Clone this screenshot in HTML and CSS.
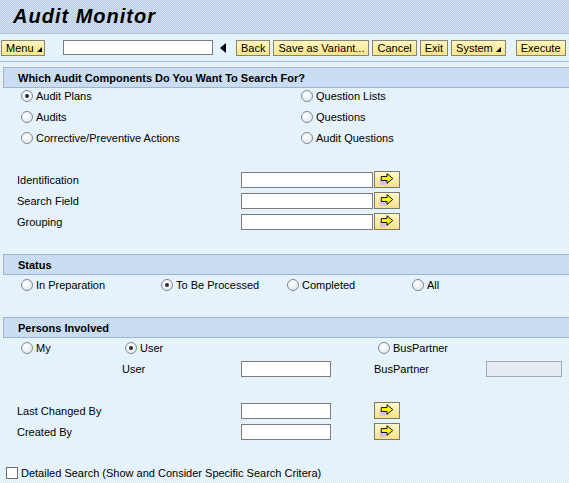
FILE: index.html
```html
<!DOCTYPE html>
<html>
<head>
<meta charset="utf-8">
<link rel="stylesheet" href="styles.css">
</head>
<body>
<div class="titlebar"><h1 class="title">Audit Monitor</h1></div>
<div class="toolbar">
  <button class="btn menu">Menu<span class="tri"></span></button>
  <input class="cmd" type="text">
  <span class="back-tri"></span>
  <button class="btn b-back">Back</button>
  <button class="btn">Save as Variant...</button>
  <button class="btn">Cancel</button>
  <button class="btn">Exit</button>
  <button class="btn">System<span class="tri"></span></button>
  <button class="btn b-exec">Execute</button>
</div>
<div class="content">
  <div class="sec-head first">Which Audit Components Do You Want To Search For?</div>
  <div class="comp-grid">
    <label class="radio"><span class="rb on"></span>Audit Plans</label>
    <label class="radio"><span class="rb"></span>Question Lists</label>
    <label class="radio"><span class="rb"></span>Audits</label>
    <label class="radio"><span class="rb"></span>Questions</label>
    <label class="radio"><span class="rb"></span>Corrective/Preventive Actions</label>
    <label class="radio"><span class="rb"></span>Audit Questions</label>
  </div>
  <div class="fields f1">
    <div class="frow"><span class="flabel">Identification</span><span class="inp wide"></span><span class="arrow"><svg width="25" height="16" viewBox="0 0 25 16"><rect x="5" y="9" width="7" height="5" fill="#d8bfe6"/><path d="M6.5 5.5 H12.5 V2.5 L18.5 7.5 L12.5 12.5 V9.5 H6.5 Z" fill="#ffff00" stroke="#000" stroke-width="1"/></svg></span></div>
    <div class="frow"><span class="flabel">Search Field</span><span class="inp wide"></span><span class="arrow"><svg width="25" height="16" viewBox="0 0 25 16"><rect x="5" y="9" width="7" height="5" fill="#d8bfe6"/><path d="M6.5 5.5 H12.5 V2.5 L18.5 7.5 L12.5 12.5 V9.5 H6.5 Z" fill="#ffff00" stroke="#000" stroke-width="1"/></svg></span></div>
    <div class="frow"><span class="flabel">Grouping</span><span class="inp wide"></span><span class="arrow"><svg width="25" height="16" viewBox="0 0 25 16"><rect x="5" y="9" width="7" height="5" fill="#d8bfe6"/><path d="M6.5 5.5 H12.5 V2.5 L18.5 7.5 L12.5 12.5 V9.5 H6.5 Z" fill="#ffff00" stroke="#000" stroke-width="1"/></svg></span></div>
  </div>
  <div class="sec-head status">Status</div>
  <div class="status-row">
    <label class="radio"><span class="rb"></span>In Preparation</label>
    <label class="radio"><span class="rb on"></span>To Be Processed</label>
    <label class="radio"><span class="rb"></span>Completed</label>
    <label class="radio"><span class="rb"></span>All</label>
  </div>
  <div class="sec-head persons">Persons Involved</div>
  <div class="persons-row">
    <label class="radio"><span class="rb"></span>My</label>
    <label class="radio"><span class="rb on"></span>User</label>
    <label class="radio"><span class="rb"></span>BusPartner</label>
  </div>
  <div class="user-row">
    <span class="ulabel">User</span>
    <span class="inp short"></span>
    <span class="blabel">BusPartner</span>
    <span class="inp dis"></span>
  </div>
  <div class="fields f2">
    <div class="frow"><span class="flabel">Last Changed By</span><span class="inp short"></span><span class="arrow far"><svg width="25" height="16" viewBox="0 0 25 16"><rect x="5" y="9" width="7" height="5" fill="#d8bfe6"/><path d="M6.5 5.5 H12.5 V2.5 L18.5 7.5 L12.5 12.5 V9.5 H6.5 Z" fill="#ffff00" stroke="#000" stroke-width="1"/></svg></span></div>
    <div class="frow"><span class="flabel">Created By</span><span class="inp short"></span><span class="arrow far"><svg width="25" height="16" viewBox="0 0 25 16"><rect x="5" y="9" width="7" height="5" fill="#d8bfe6"/><path d="M6.5 5.5 H12.5 V2.5 L18.5 7.5 L12.5 12.5 V9.5 H6.5 Z" fill="#ffff00" stroke="#000" stroke-width="1"/></svg></span></div>
  </div>
  <label class="check"><span class="cb"></span>Detailed Search (Show and Consider Specific Search Critera)</label>
</div>
</body>
</html>
```
FILE: styles.css
```css
* { box-sizing: border-box; }
html, body { margin: 0; padding: 0; }
body {
  width: 569px;
  height: 483px;
  overflow: hidden;
  font-family: "Liberation Sans", Arial, sans-serif;
  font-size: 11px;
  color: #000;
  background: repeating-conic-gradient(#dcecfa 0 25%, #eef9fd 0 50%) 0 0 / 2px 2px;
}
.titlebar {
  height: 34px;
  padding-left: 13px;
  background: repeating-conic-gradient(#bccde6 0 25%, #d2e0f0 0 50%) 0 0 / 2px 2px;
  border-bottom: 1px solid #aebfd8;
  display: flex;
  align-items: center;
}
.title {
  margin: 0;
  font-family: "Liberation Sans", Arial, sans-serif;
  font-size: 20px;
  font-weight: bold;
  font-style: italic;
  letter-spacing: 1px;
}
.toolbar {
  margin-top: 4px;
  height: 19px;
  display: flex;
  align-items: center;
  padding-left: 1px;
  border-bottom: 1px solid #a9bcd6;
  padding-bottom: 4px;
  box-sizing: content-box;
}
.btn {
  height: 16px;
  margin: 0 3px 0 0;
  padding: 0 4px;
  font-family: "Liberation Sans", Arial, sans-serif;
  font-size: 11px;
  line-height: 14px;
  white-space: nowrap;
  color: #000;
  background: linear-gradient(#fff6c0, #f8e488);
  border: 1px solid #8a8470;
  border-radius: 0;
  display: flex;
  align-items: center;
}
.menu { width: 44px; }
.tri {
  display: inline-block;
  width: 0; height: 0;
  margin-left: 3px;
  margin-top: 4px;
  border-left: 5px solid transparent;
  border-bottom: 5px solid #000;
}
.cmd {
  width: 150px;
  height: 15px;
  margin-left: 15px;
  border: 1px solid #7c7c7c;
  background: #fff;
  padding: 0;
}
.back-tri {
  width: 0; height: 0;
  margin-left: 7px;
  border-top: 5px solid transparent;
  border-bottom: 5px solid transparent;
  border-right: 6px solid #000;
}
.b-back { margin-left: 10px; }
.b-exec { margin-left: 7px; }
.content { padding-left: 3px; margin-top: 5px; }
.sec-head {
  height: 21px;
  padding-left: 14px;
  display: flex;
  align-items: center;
  font-weight: bold;
  font-size: 11px;
  background: repeating-conic-gradient(#c0d6ef 0 25%, #d4e4f6 0 50%) 0 0 / 2px 2px;
  border-top: 1px solid #9fb4d2;
  border-bottom: 1px solid #9fb4d2;
  border-left: 1px solid #9fb4d2;
}
.radio {
  display: flex;
  align-items: center;
  height: 21px;
  white-space: nowrap;
}
.rb {
  width: 12px; height: 12px;
  border-radius: 50%;
  border: 1px solid #7e8a98;
  background: radial-gradient(circle at 40% 35%, #ffffff, #dfe3e8);
  margin-right: 3px;
  position: relative;
  flex: none;
}
.rb.on::after {
  content: "";
  position: absolute;
  left: 3px; top: 3px;
  width: 4px; height: 4px;
  border-radius: 50%;
  background: #2a2a3a;
}
.comp-grid {
  display: grid;
  grid-template-columns: 280px 1fr;
  padding-left: 18px;
  margin-top: -3px;
}
.fields .frow {
  display: flex;
  align-items: center;
  height: 21px;
  padding-left: 14px;
}
.f1 { margin-top: 21px; }
.flabel { width: 224px; }
.inp {
  height: 16px;
  border: 1px solid #7c7c7c;
  background: #fff;
}
.inp.wide { width: 132px; }
.inp.short { width: 90px; }
.arrow {
  width: 26px; height: 17px;
  margin-left: 1px;
  border: 1px solid #7c7a6c;
  background: linear-gradient(#fff8cc, #f6e08a);
  display: flex;
  align-items: center;
  justify-content: center;
  margin-top: -1px;
}
.arrow svg { display: block; }
.arrow.far { margin-left: 43px; }
.status { margin-top: 22px; }
.status-row {
  display: grid;
  grid-template-columns: 140px 126px 125px 1fr;
  padding-left: 18px;
  height: 20px;
  margin-top: -1px;
  align-items: center;
}
.persons { margin-top: 23px; }
.persons-row {
  display: grid;
  grid-template-columns: 104px 253px 1fr;
  padding-left: 18px;
  height: 20px;
  margin-top: -1px;
  align-items: center;
}
.user-row {
  display: flex;
  align-items: center;
  height: 21px;
  margin-top: 1px;
}
.ulabel { margin-left: 119px; width: 119px; }
.blabel { margin-left: 43px; width: 112px; }
.inp.dis {
  width: 76px;
  background: #e4ecf4;
  border: 1px solid #a0a8b0;
}
.f2 { margin-top: 21px; }
.check {
  display: flex;
  align-items: center;
  height: 20px;
  margin-top: 21px;
  margin-left: 3px;
}
.cb {
  width: 12px; height: 12px;
  border: 1px solid #6f6f6f;
  background: #fff;
  margin-right: 3px;
}
```
